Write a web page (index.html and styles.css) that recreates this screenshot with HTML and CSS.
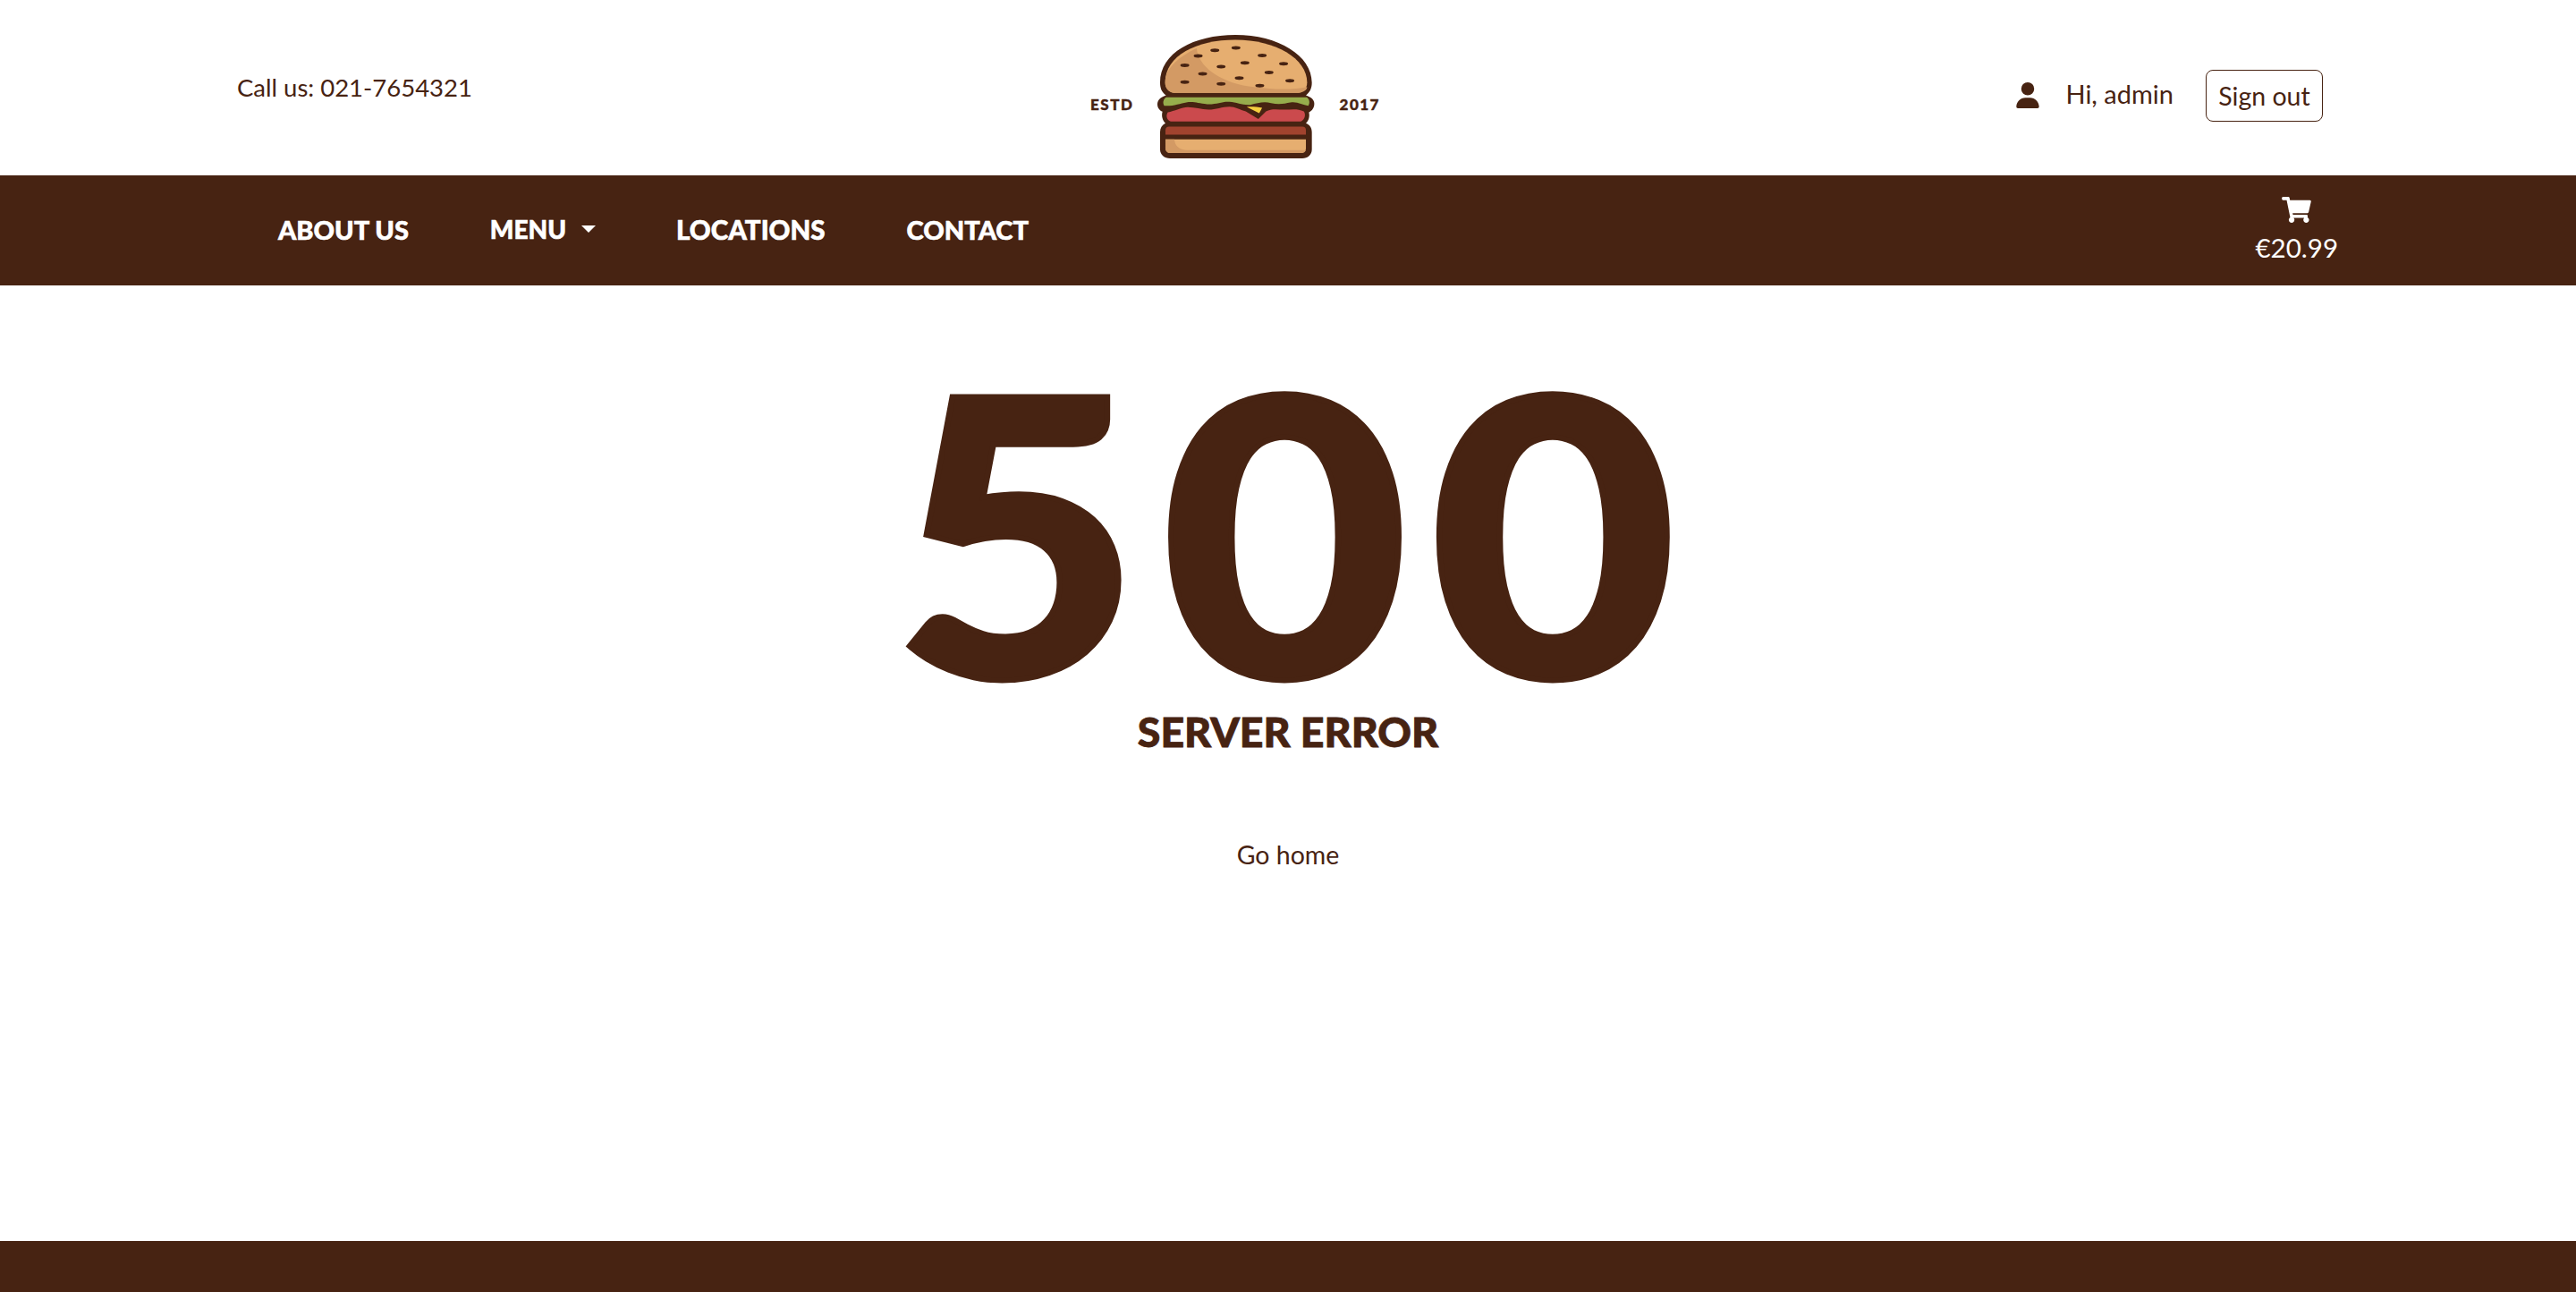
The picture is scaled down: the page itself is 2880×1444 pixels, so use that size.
FILE: index.html
```html
<!DOCTYPE html>
<html lang="en">
<head>
<meta charset="utf-8">
<title>500 Server Error</title>
<link rel="stylesheet" href="styles.css">
</head>
<body>
<header class="topbar">
  <div class="call">Call us: 021-7654321</div>
  <a class="logo" href="#">
    <span class="logo-text">ESTD</span>
    <svg class="burger" viewBox="340 50 535 425" aria-hidden="true">
      <path class="dark" d="M352 215C352 115 465 55 605 55C750 55 862 125 862 215C862 235 855 248 842 258C862 265 872 275 870 290C868 305 858 312 852 315C856 330 850 345 842 352C856 358 862 368 862 382V440C862 458 848 470 830 470H385C367 470 352 458 352 440V382C352 368 358 358 370 352C360 342 356 328 360 313C350 308 343 300 343 288C343 275 352 265 372 258C358 248 352 235 352 215Z"/>
      <path class="bun" d="M369 215C369 125 475 72 605 72C740 72 846 135 846 215C846 238 830 250 810 250H405C385 250 369 238 369 215Z"/>
      <path class="bun-shade" d="M475 100C420 125 369 165 369 215C369 238 385 250 405 250H810C830 250 846 242 846 230C800 240 730 240 650 228C550 212 480 160 475 100Z"/>
      <g class="dark">
        <ellipse cx="536" cy="107" rx="15" ry="6"/><ellipse cx="607" cy="99" rx="15" ry="6"/>
        <ellipse cx="480" cy="126" rx="15" ry="6"/><ellipse cx="695" cy="124" rx="15" ry="6"/>
        <ellipse cx="435" cy="157" rx="15" ry="6"/><ellipse cx="557" cy="162" rx="15" ry="6"/>
        <ellipse cx="637" cy="149" rx="15" ry="6"/><ellipse cx="767" cy="152" rx="15" ry="6"/>
        <ellipse cx="495" cy="186" rx="15" ry="6"/><ellipse cx="718" cy="181" rx="15" ry="6"/>
        <ellipse cx="435" cy="214" rx="15" ry="6"/><ellipse cx="557" cy="220" rx="15" ry="6"/>
        <ellipse cx="618" cy="200" rx="15" ry="6"/><ellipse cx="687" cy="226" rx="15" ry="6"/>
        <ellipse cx="788" cy="209" rx="15" ry="6"/>
      </g>
      <path class="lettuce" d="M372 265H845C855 272 856 285 850 293C830 290 812 278 790 282C770 286 750 290 725 284C700 278 680 284 655 290C630 292 610 282 585 280C560 278 540 290 510 288C480 285 465 278 440 282C420 286 390 296 366 293C360 285 362 272 372 265Z"/>
      <path class="meat" d="M378 315C400 312 425 298 445 298C470 298 490 306 515 306C540 306 560 296 585 296C605 296 620 306 640 312L682 338L708 312C725 302 745 306 770 306C795 306 815 302 835 312C842 322 840 338 825 346H388C372 340 372 324 378 315Z"/>
      <path class="cheese" d="M643 297C660 296 680 297 695 300L685 318Z"/>
      <path class="patty" d="M370 375C370 367 375 363 382 363H830C838 363 842 367 842 375V390H370Z"/>
      <path class="bun" d="M370 406H842V435C842 445 835 452 825 452H387C377 452 370 445 370 435Z"/>
      <path class="bun-shade" d="M370 406H400C402 425 412 440 440 442H842C840 448 835 452 825 452H387C377 452 370 445 370 435Z"/>
    </svg>
    <span class="logo-text">2017</span>
  </a>
  <div class="account">
    <svg class="person" viewBox="0 0 448 512" aria-hidden="true"><path d="M224 256a128 128 0 1 0 0-256 128 128 0 0 0 0 256zm-45.700 48C79.800 304 0 383.800 0 482.300 0 498.700 13.300 512 29.700 512h388.600c16.400 0 29.700-13.300 29.700-29.700C448 383.800 368.200 304 269.700 304h-91.400z"/></svg>
    <span class="greeting">Hi, admin</span>
    <a class="signout" href="#">Sign out</a>
  </div>
</header>
<nav class="navbar">
  <ul class="nav-list">
    <li class="nav-about"><a href="#">ABOUT US</a></li>
    <li class="nav-menu"><a class="dropdown" href="#">MENU</a></li>
    <li class="nav-locations"><a href="#">LOCATIONS</a></li>
    <li class="nav-contact"><a href="#">CONTACT</a></li>
  </ul>
  <a class="cart" href="#">
    <svg class="cart-icon" viewBox="0 0 576 512" aria-hidden="true"><path d="M528.120 301.319l47.273-208C578.806 78.301 567.391 64 551.990 64H159.208l-9.166-44.810C147.758 8.021 137.930 0 126.529 0H24C10.745 0 0 10.745 0 24v16c0 13.255 10.745 24 24 24h69.883l70.248 343.435C147.325 417.100 136 435.222 136 456c0 30.928 25.072 56 56 56s56-25.072 56-56c0-15.674-6.447-29.835-16.824-40h209.647C430.447 426.165 424 440.326 424 456c0 30.928 25.072 56 56 56s56-25.072 56-56c0-22.172-12.888-41.332-31.579-50.405l5.517-24.276c3.413-15.018-8.002-29.319-23.403-29.319H218.117l-6.545-32h293.145c11.206 0 20.920-7.754 23.403-18.681z"/></svg>
    <span class="cart-price">€20.99</span>
  </a>
</nav>
<main class="error">
  <div class="code">500</div>
  <h1 class="title">SERVER ERROR</h1>
  <a class="home" href="#">Go home</a>
</main>
<footer class="footer"></footer>
</body>
</html>
```
FILE: styles.css
```css
* { box-sizing: border-box; }
html, body { margin: 0; height: 100%; }
body {
  display: flex;
  flex-direction: column;
  min-height: 1444px;
  overflow: hidden;
  background: #fff;
  color: #472312;
  font-family: "Lato", "Noto Sans", sans-serif;
}
a { color: inherit; text-decoration: none; }

.topbar {
  height: 196px;
  display: grid;
  grid-template-columns: 954px 324px 1fr;
  padding: 0 283px 0 265px;
  flex: none;
}
.call { font-size: 27.5px; padding-top: 80px; line-height: 36px; }
.logo { display: flex; align-items: center; justify-content: space-between; height: 196px; padding-top: 22px; }
.logo-text { font-size: 17px; font-weight: 900; letter-spacing: 1.5px; margin-top: 15px; -webkit-text-stroke: 0.4px #472312; }
.burger { display: block; width: 178px; height: 142px; margin-top: -2px; }
.dark { fill: #472312; }
.bun { fill: #e6ae70; }
.bun-shade { fill: #d39a64; }
.lettuce { fill: #96ad4c; }
.meat { fill: #cb4a4d; }
.cheese { fill: #f4cf3f; }
.patty { fill: #a1432e; }

.account { display: flex; align-items: center; justify-content: flex-end; height: 58px; margin-top: 78px; }
.person { width: 26px; height: 29px; fill: #472312; margin-right: 29px; margin-top: -2px; }
.greeting { font-size: 29px; margin-right: 36px; margin-top: -6px; }
.signout {
  width: 131px; height: 58px;
  display: flex; align-items: center; justify-content: center;
  border: 1px solid #472312; border-radius: 8px;
  font-size: 28.5px;
}

.navbar {
  height: 123px;
  background: #472312;
  color: #fff;
  display: flex;
  align-items: center;
  justify-content: space-between;
  padding: 0 266px 0 311px;
  flex: none;
}
.nav-list { display: flex; gap: 90px; list-style: none; margin: 0; padding: 0 0 3px; }
.nav-list a { font-size: 29px; font-weight: 900; display: flex; align-items: center; -webkit-text-stroke: 0.6px #fff; }
.nav-menu { margin-left: 1px; }
.nav-menu a { font-size: 28px; }
.nav-locations a { font-size: 29.5px; }
.nav-contact { margin-left: 1px; }
.dropdown::after {
  content: "";
  margin-left: 17px;
  border-top: 8px solid #fff;
  border-left: 8px solid transparent;
  border-right: 8px solid transparent;
}
.cart { display: flex; flex-direction: column; align-items: center; font-size: 29.5px; }
.cart-icon { width: 33px; height: 29px; fill: #fff; margin-bottom: 10px; margin-top: -1px; }

.error { flex: 1; display: flex; flex-direction: column; align-items: center; }
.code {
  font-size: 432px;
  font-weight: 900;
  line-height: 380px;
  letter-spacing: 22px;
  padding-left: 15px;
  margin-top: 81px;
  -webkit-text-stroke: 6px #472312;
  transform: scaleX(1.1);
}
.title { margin: 9px 0 0; font-size: 46.5px; font-weight: 900; line-height: 56px; -webkit-text-stroke: 0.8px #472312; }
.home { margin-top: 90px; font-size: 28.5px; line-height: 40px; }
.footer { height: 57px; background: #472312; flex: none; }
```
